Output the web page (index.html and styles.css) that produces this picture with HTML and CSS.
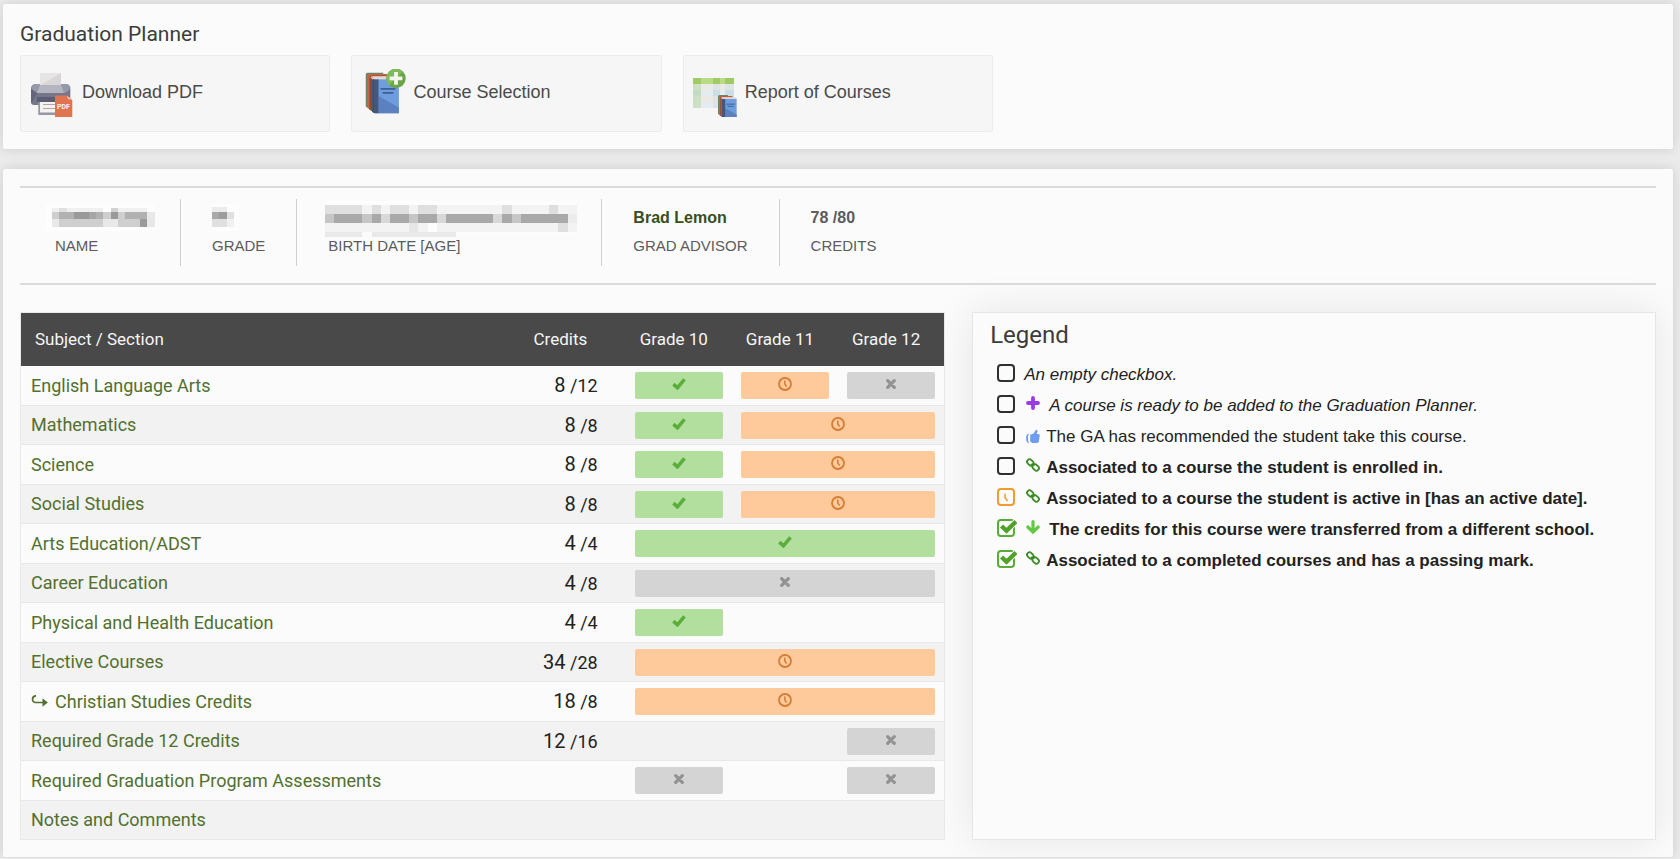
FILE: index.html
```html
<!DOCTYPE html>
<html lang="en">
<head>
<meta charset="utf-8">
<title>Graduation Planner</title>
<link rel="stylesheet" href="styles.css">
</head>
<body>
<svg class="defs" aria-hidden="true">
  <symbol id="check" viewBox="0 0 14 12"><path d="M1.4 6.2 5.400 9.800 12.500 1.400" fill="none" stroke="#5cae3c" stroke-width="3.6"/></symbol>
  <symbol id="clock" viewBox="0 0 14 14"><circle cx="7" cy="7" r="6" fill="none" stroke="#d47e35" stroke-width="1.8"/><path d="M6.8 3.4V7L8.6 9.6" fill="none" stroke="#d47e35" stroke-width="1.500"/></symbol>
  <symbol id="cross" viewBox="0 0 10 10"><path d="M1.7 1.7 8.3 8.3M8.3 1.7 1.7 8.3" fill="none" stroke="#929292" stroke-width="3.2" stroke-linecap="round"/></symbol>
  <symbol id="chain" viewBox="0 0 14 14"><g fill="none" stroke="#3b8a26" stroke-width="1.8"><rect x=".8" y="2" width="7" height="5" rx="2.500" transform="rotate(45 4.300 4.500)"/><rect x="6.200" y="7" width="7" height="5" rx="2.500" transform="rotate(45 9.700 9.500)"/><path d="M5 7.200Q7 5.200 9 7"/></g></symbol>
  <symbol id="books" viewBox="0 0 34 41">
    <path d="M0 3Q0 0 3 0H18L16 6H4V36L0 34Z" fill="#6c8568"/>
    <path d="M2 4Q2 1.6 4.5 1.6H26V6H6V38L2 35.600Z" fill="#bd6845"/>
    <path d="M4 5Q4 3 6.500 3H25V7H8V39.500L4 37.200Z" fill="#914936"/>
    <path d="M5 5.500Q5 3.600 8 3.600H28V7H8Z" fill="#e8b69c"/>
    <path d="M6.600 7.500Q6.600 4.600 9.500 4.600H33V7H9V41L6.600 39Z" fill="#d8dbe2"/>
    <path d="M6.600 7Q9 5.500 9 9V41L6.600 39.300Z" fill="#3b4762"/>
    <path d="M8.600 7H33.400V40Q33.400 41 32.400 41H10Q8.600 41 8.600 39.500Z" fill="#6e9ddd"/>
    <path d="M13 23.500 33.400 35V41H13Z" fill="#5b82bf"/>
    <path d="M8 7H13V41H10Q8 41 8 39Z" fill="#44577d"/>
    <path d="M15 16.300H30M17 20.300H28" stroke="#3e5f96" stroke-width="1.700"/>
  </symbol>
</svg>

<header class="card">
  <h1 class="title">Graduation Planner</h1>
  <nav class="actions">
    <a class="action" href="#pdf">
      <svg class="action-icon" viewBox="0 0 48 48" aria-hidden="true">
        <path d="M2 19Q3 15 7 15H36Q41 15 41.300 19V33Q41.300 36 38 36H5Q2 36 2 33Z" fill="#747689"/>
        <path d="M2 19Q3 15 7 15H36Q41 15 41.300 19Q38 24 35 24H8Q5 23 2 19Z" fill="#9799aa"/>
        <path d="M2 20 8 24 3 34 2 33Z" fill="#63667a"/>
        <path d="M11 4H32V16L35 24H8L11 16Z" fill="#b4b5c1"/>
        <path d="M11 4H32V16H11Z" fill="#e7e5e4"/>
        <path d="M32 4V16H12Z" fill="#d8d6d8"/>
        <path d="M8 28H35V33H8Z" fill="#5b5e72"/>
        <path d="M9.300 33H30V46H9.300Z" fill="#9597a5"/>
        <path d="M11 33H28V43.500H11Z" fill="#f3f2ef"/>
        <path d="M14 35.500H27M14 39.500H27" stroke="#a9a9a9" stroke-width="1.200"/>
        <path d="M27 26.500H38L43.300 31V47.500Q43.300 48 42.600 48H26.500Q26 48 26 47.500V27.500Q26 26.500 27 26.500Z" fill="#e07450"/>
        <path d="M38 26.500 43.300 31 39 30Z" fill="#efc4b5"/>
        <text class="pdf-tag" x="28" y="40">PDF</text>
      </svg>
      Download PDF</a>
    <a class="action" href="#selection">
      <svg class="action-icon" viewBox="0 0 48 48" aria-hidden="true">
        <use href="#books" x="5.500" y="3.500" width="34" height="41"/>
        <circle cx="36" cy="9.400" r="9.700" fill="#6ba548"/>
        <path d="M29.100 16.300A9.700 9.700 0 0 1 42.900 2.500Z" fill="#80bb5b"/>
        <path d="M36 3V15.800M29.600 9.400H42.400" stroke="#f2f6ef" stroke-width="3.800"/>
      </svg>
      Course Selection</a>
    <a class="action" href="#report">
      <svg class="action-icon" viewBox="0 0 48 48" aria-hidden="true">
        <rect x="1" y="9" width="41" height="30" rx="1" fill="#e4ebf1"/>
        <path d="M1 15H42V21H1ZM1 27H42V33H1Z" fill="#ebe9e4"/>
        <path d="M1 21H9V27H1ZM21 21H28V27H21ZM33 21H42V27H33Z" fill="#c9dbe5"/>
        <path d="M1 15H9V39H1Z" fill="#c0dcb5" opacity=".7"/>
        <path d="M1 9H42V15H1Z" fill="#b9db85"/>
        <path d="M1 9H9V15H1ZM21 9H28V15H21ZM33 9H42V15H33Z" fill="#9fcb66"/>
        <path d="M21 15H28V39H21ZM33 15H42V39H33Z" fill="#d0dfe2" opacity=".5"/>
        <use href="#books" x="26" y="26" width="19" height="23"/>
      </svg>
      Report of Courses</a>
  </nav>
</header>

<main class="card">
  <dl class="facts">
    <div class="fact">
      <dd class="value">
        <svg class="mask" width="94" height="20" viewBox="9 12 282 60" shape-rendering="crispEdges" role="img" aria-label="Hidden name">
          <path d="M-22 0H308V80H-22Z" fill="#fdfdfd"/>
          <path d="M0 12H22V24H0ZM44 12H154V24H44ZM198 12H286V24H198Z" fill="#f0f0f0"/>
          <path d="M22 12H44V24H22Z" fill="#e0e0e0"/><path d="M176 12H198V24H176Z" fill="#d2d2d2"/>
          <path d="M0 24H22V46H0ZM154 24H176V46H154ZM198 24H220V46H198Z" fill="#cecece"/>
          <path d="M22 24H66V46H22ZM132 24H154V46H132ZM220 24H286V46H220Z" fill="#b1b1b1"/>
          <path d="M66 24H110V46H66ZM176 24H198V46H176ZM264 46H286V68H264Z" fill="#9a9a9a"/>
          <path d="M110 24H132V46H110Z" fill="#a6a6a6"/>
          <path d="M0 46H22V68H0ZM154 46H198V68H154ZM286 24H308V68H286Z" fill="#e8e8e8"/>
          <path d="M22 46H154V68H22ZM198 46H264V68H198Z" fill="#cfcfcf"/>
        </svg>
      </dd>
      <dt class="label">NAME</dt>
    </div>
    <div class="fact">
      <dd class="value">
        <svg class="mask" width="22" height="20" viewBox="0 12 66 60" shape-rendering="crispEdges" role="img" aria-label="Hidden grade">
          <path d="M0 0H80V80H0Z" fill="#fdfdfd"/>
          <path d="M0 8H44V24H0Z" fill="#ebebeb"/>
          <path d="M0 24H22V46H0Z" fill="#a9a9a9"/><path d="M22 24H44V46H22Z" fill="#9c9c9c"/>
          <path d="M44 24H66V46H44ZM0 46H44V68H0Z" fill="#e0e0e0"/><path d="M44 46H66V68H44Z" fill="#f1f1f1"/>
        </svg>
      </dd>
      <dt class="label">GRADE</dt>
    </div>
    <div class="fact">
      <dd class="value">
        <svg class="mask" width="242" height="20" viewBox="9 12 726 60" shape-rendering="crispEdges" role="img" aria-label="Hidden birth date">
          <path d="M0 -8H756V84H0Z" fill="#fdfdfd"/>
          <path d="M0 3H756V85H0Z" fill="#f3f3f3"/>
          <path d="M392 85V92H756V85Z" fill="#fcfcfc"/>
          <path d="M0 3H112V30H0ZM140 3H168V30H140ZM196 3H252V30H196ZM280 3H336V30H280ZM532 3H560V30H532ZM672 3H700V30H672ZM700 58H728V85H700Z" fill="#dfdfdf"/>
          <path d="M0 85H112V99H0ZM140 85H392V99H140Z" fill="#e9e9e9"/>
          <path d="M252 58H280V85H252Z" fill="#e6e6e6"/>
          <path d="M308 58H336V85H308Z" fill="#fdfdfd"/>
          <path d="M0 30H728V58H0Z" fill="#a9a9a9"/>
          <path d="M728 30H756V58H728Z" fill="#ececec"/>
          <path d="M0 30H28V58H0ZM112 30H140V58H112ZM252 30H280V58H252ZM560 30H588V58H560Z" fill="#c6c6c6"/>
          <path d="M168 30H196V58H168ZM336 30H364V58H336ZM504 30H532V58H504Z" fill="#d8d8d8"/>
        </svg>
      </dd>
      <dt class="label">BIRTH DATE [AGE]</dt>
    </div>
    <div class="fact">
      <dd class="value"><a class="advisor" href="#advisor">Brad Lemon</a></dd>
      <dt class="label">GRAD ADVISOR</dt>
    </div>
    <div class="fact">
      <dd class="value">78 /80</dd>
      <dt class="label">CREDITS</dt>
    </div>
  </dl>

  <div class="columns">
    <table class="plan">
      <colgroup><col><col class="narrow"><col class="narrow"><col class="narrow"><col class="narrow"></colgroup>
      <thead>
        <tr><th scope="col">Subject / Section</th><th scope="col">Credits</th><th scope="col">Grade 10</th><th scope="col">Grade 11</th><th scope="col">Grade 12</th></tr>
      </thead>
      <tbody>
        <tr><td><a href="#ela">English Language Arts</a></td><td class="credits"><b>8</b> /12</td>
          <td><div class="bar done"><svg class="check"><use href="#check"/></svg></div></td>
          <td><div class="bar active"><svg class="clock"><use href="#clock"/></svg></div></td>
          <td><div class="bar none"><svg class="cross"><use href="#cross"/></svg></div></td></tr>
        <tr><td><a href="#math">Mathematics</a></td><td class="credits"><b>8</b> /8</td>
          <td><div class="bar done"><svg class="check"><use href="#check"/></svg></div></td>
          <td colspan="2"><div class="bar active"><svg class="clock"><use href="#clock"/></svg></div></td></tr>
        <tr><td><a href="#science">Science</a></td><td class="credits"><b>8</b> /8</td>
          <td><div class="bar done"><svg class="check"><use href="#check"/></svg></div></td>
          <td colspan="2"><div class="bar active"><svg class="clock"><use href="#clock"/></svg></div></td></tr>
        <tr><td><a href="#social">Social Studies</a></td><td class="credits"><b>8</b> /8</td>
          <td><div class="bar done"><svg class="check"><use href="#check"/></svg></div></td>
          <td colspan="2"><div class="bar active"><svg class="clock"><use href="#clock"/></svg></div></td></tr>
        <tr><td><a href="#arts">Arts Education/ADST</a></td><td class="credits"><b>4</b> /4</td>
          <td colspan="3"><div class="bar done"><svg class="check"><use href="#check"/></svg></div></td></tr>
        <tr><td><a href="#career">Career Education</a></td><td class="credits"><b>4</b> /8</td>
          <td colspan="3"><div class="bar none"><svg class="cross"><use href="#cross"/></svg></div></td></tr>
        <tr><td><a href="#phe">Physical and Health Education</a></td><td class="credits"><b>4</b> /4</td>
          <td><div class="bar done"><svg class="check"><use href="#check"/></svg></div></td><td></td><td></td></tr>
        <tr><td><a href="#elective">Elective Courses</a></td><td class="credits"><b>34</b> /28</td>
          <td colspan="3"><div class="bar active"><svg class="clock"><use href="#clock"/></svg></div></td></tr>
        <tr><td><a href="#christian"><svg class="hook" viewBox="0 0 18 14" aria-hidden="true"><path d="M5 .800C.500.800.500 7.500 4.500 7.500H13" fill="none" stroke="#52702f" stroke-width="1.700"/><path d="M11.500 3.300 16.800 7.500 11.500 11.700Z" fill="#52702f"/></svg>Christian Studies Credits</a></td><td class="credits"><b>18</b> /8</td>
          <td colspan="3"><div class="bar active"><svg class="clock"><use href="#clock"/></svg></div></td></tr>
        <tr><td><a href="#grade12">Required Grade 12 Credits</a></td><td class="credits"><b>12</b> /16</td>
          <td></td><td></td><td><div class="bar none"><svg class="cross"><use href="#cross"/></svg></div></td></tr>
        <tr><td><a href="#assessments">Required Graduation Program Assessments</a></td><td></td>
          <td><div class="bar none"><svg class="cross"><use href="#cross"/></svg></div></td><td></td>
          <td><div class="bar none"><svg class="cross"><use href="#cross"/></svg></div></td></tr>
        <tr><td><a href="#notes">Notes and Comments</a></td><td></td><td></td><td></td><td></td></tr>
      </tbody>
    </table>

    <aside class="legend">
      <h2 class="legend-title">Legend</h2>
      <ul class="legend-list">
        <li><label class="item"><span class="box"><input type="checkbox"></span><em>An empty checkbox.</em></label></li>
        <li><label class="item"><span class="box"><input type="checkbox"></span><svg class="mark wide" viewBox="0 0 14 14"><path d="M7 2V12M2 7H12" stroke="#9a3be6" stroke-width="3.800" stroke-linecap="round"/></svg><em>A course is ready to be added to the Graduation Planner.</em></label></li>
        <li><label class="item"><span class="box"><input type="checkbox"></span><svg class="mark low" viewBox="0 0 14 14"><path d="M4.200 5.800 7.500 4.500 10 .8Q11.700.400 11.500 2.400L10.600 5H12.600Q14 5.200 13.700 6.800L12.800 12.600Q12.500 14 11 14H6.200L4.200 12.600Z" fill="#6f9df5"/><path d="M2.800 5.300Q1.400 5.300 1.400 7V12Q1.400 13.400 2.800 13.400" fill="none" stroke="#6f9df5" stroke-width="1.300"/><path d="M.500 6.500V12" stroke="#6f9df5" stroke-width=".8"/></svg>The GA has recommended the student take this course.</label></li>
        <li><label class="item"><span class="box"><input type="checkbox"></span><svg class="mark"><use href="#chain"/></svg><strong>Associated to a course the student is enrolled in.</strong></label></li>
        <li><label class="item"><span class="box"><input class="pending" type="checkbox"><svg class="tick" viewBox="0 0 20 18"><path d="M8 5.500V9.500L10.500 13" fill="none" stroke="#ee9c33" stroke-width="1.500"/></svg></span><svg class="mark"><use href="#chain"/></svg><strong>Associated to a course the student is active in [has an active date].</strong></label></li>
        <li><label class="item"><span class="box"><input type="checkbox" checked><svg class="tick" viewBox="0 0 20 18"><path d="M4.500 7 9.500 11.800 19 2.500" fill="none" stroke="#fbfbfb" stroke-width="6"/><path d="M4.500 7 9.500 11.800 19 2.500" fill="none" stroke="#50a129" stroke-width="4.400"/></svg></span><svg class="mark wide" viewBox="0 0 14 14"><path d="M7 1.600V11.500M1.800 7 7 12 12.200 7" fill="none" stroke="#63c845" stroke-width="3.200" stroke-linecap="round"/></svg><strong>The credits for this course were transferred from a different school.</strong></label></li>
        <li><label class="item"><span class="box"><input type="checkbox" checked><svg class="tick" viewBox="0 0 20 18"><path d="M4.500 7 9.500 11.800 19 2.500" fill="none" stroke="#fbfbfb" stroke-width="6"/><path d="M4.500 7 9.500 11.800 19 2.500" fill="none" stroke="#50a129" stroke-width="4.400"/></svg></span><svg class="mark"><use href="#chain"/></svg><strong>Associated to a completed courses and has a passing mark.</strong></label></li>
      </ul>
    </aside>
  </div>
</main>
</body>
</html>
```
FILE: styles.css
```css
* { box-sizing: border-box; }

body {
  margin: 0;
  padding: 4px 7px 1px 3px;
  display: flex;
  flex-direction: column;
  gap: 20px;
  background: #ebebeb;
  color: #222;
  font-family: "Liberation Sans", Arial, sans-serif;
}

h1, h2, dl, dd, ul { margin: 0; padding: 0; }
ul { list-style: none; }
a { text-decoration: none; }
svg { display: block; flex: none; }
.defs { position: absolute; width: 0; height: 0; }

.card {
  padding: 17px;
  overflow: hidden;
  background: #fbfbfb;
  border-radius: 2px;
  box-shadow: 0 0 12px rgba(0, 0, 0, .13);
}

/* Page header */
.title {
  font: 400 21px/26px Roboto, sans-serif;
  color: #3c3c3c;
  margin-bottom: 8px;
}
.actions {
  display: grid;
  grid-template-columns: repeat(5, 1fr);
  gap: 21px;
}
.action {
  display: flex;
  align-items: center;
  gap: 5px;
  height: 77px;
  padding: 0 8px 2px;
  background: #f6f6f6;
  border: 1px solid #ececec;
  border-radius: 2px;
  color: #4a4a4a;
  font-size: 18px;
}
.action-icon { width: 48px; height: 48px; }
.pdf-tag { font: 700 7px Roboto, sans-serif; fill: #fdf3ef; }

/* Student facts */
.facts {
  display: flex;
  padding: 11px 0 17px;
  border-top: 2px solid #dbdbdb;
  border-bottom: 2px solid #dbdbdb;
  color: #5c5c5c;
  font-size: 15px;
}
.fact {
  display: flex;
  flex-direction: column;
  gap: 8px;
  height: 67px;
  padding: 9px 31px 0;
}
.fact + .fact { border-left: 1px solid #cfcfcf; }
.fact:first-child { padding-left: 35px; }
.value { height: 20px; font-size: 16px; line-height: 20px; font-weight: 700; }
.label { line-height: 20px; }
.advisor { color: #3a4d22; }
.mask { overflow: visible; }

/* Plan and legend */
.columns {
  display: grid;
  grid-template-columns: 23fr 17fr;
  gap: 27px;
  padding-top: 27px;
}
.plan {
  position: relative;
  z-index: 1;
  width: 100%;
  table-layout: fixed;
  border-collapse: separate;
  border-spacing: 0;
  border: 1px solid #e8e8e8;
  border-bottom: 0;
  background: #fbfbfb;
  font: 400 18px/24px Roboto, sans-serif;
}
.narrow { width: 11.5%; }
.plan th {
  height: 53px;
  padding: 0 14px 2px;
  background: #494949;
  color: #f6f6f6;
  font-size: 17px;
  font-weight: 400;
  text-align: left;
  white-space: nowrap;
}
.plan td {
  height: 39px;
  padding: 0 9px;
  border-bottom: 1px solid #e8e8e8;
}
.plan td:first-child { padding-left: 10px; }
.plan tr:nth-child(odd) td { height: 40px; }
.plan tr:nth-child(even) td { background: #f2f2f2; }
.plan td a { display: flex; align-items: center; gap: 6px; color: #52702f; }
.plan .credits { padding-right: 28px; text-align: right; white-space: nowrap; }
.credits b { font-size: 20px; font-weight: 400; }
.hook { width: 18px; height: 14px; }

.bar {
  display: flex;
  align-items: center;
  justify-content: center;
  height: 27px;
  padding-bottom: 3px;
  border-radius: 2px;
}
.done { background: #b2df9d; }
.active { background: #fec99b; }
.none { background: #d4d4d4; }
.check { width: 14px; height: 12px; }
.clock { width: 14px; height: 14px; }
.cross { width: 10px; height: 10px; }

.legend {
  padding: 9px 17px;
  background: #fbfbfb;
  border: 1px solid #e6e6e6;
  box-shadow: 0 0 40px rgba(0, 0, 0, .09);
}
.legend-title {
  font: 400 24px/26px Roboto, sans-serif;
  color: #3c3c3c;
}
.legend-list { padding: 11px 0 0 7px; }
.item {
  display: flex;
  align-items: center;
  height: 31px;
  font-size: 17px;
  white-space: nowrap;
}
.box {
  position: relative;
  flex: none;
  width: 17px;
  margin-right: 10px;
  padding-bottom: 3px;
}
.box input {
  display: block;
  appearance: none;
  width: 18px;
  height: 18px;
  margin: 0;
  border: 2px solid #303030;
  border-radius: 4px;
}
.box input:checked { border-color: #5bab3a; }
.box .pending { border-color: #ee9c33; }
.tick { position: absolute; top: 0; left: 0; width: 20px; height: 18px; pointer-events: none; }
.mark { width: 14px; height: 14px; margin: 0 6px 5px 2px; }
.wide { margin-right: 9px; }
.low { margin-bottom: 2px; }
```
